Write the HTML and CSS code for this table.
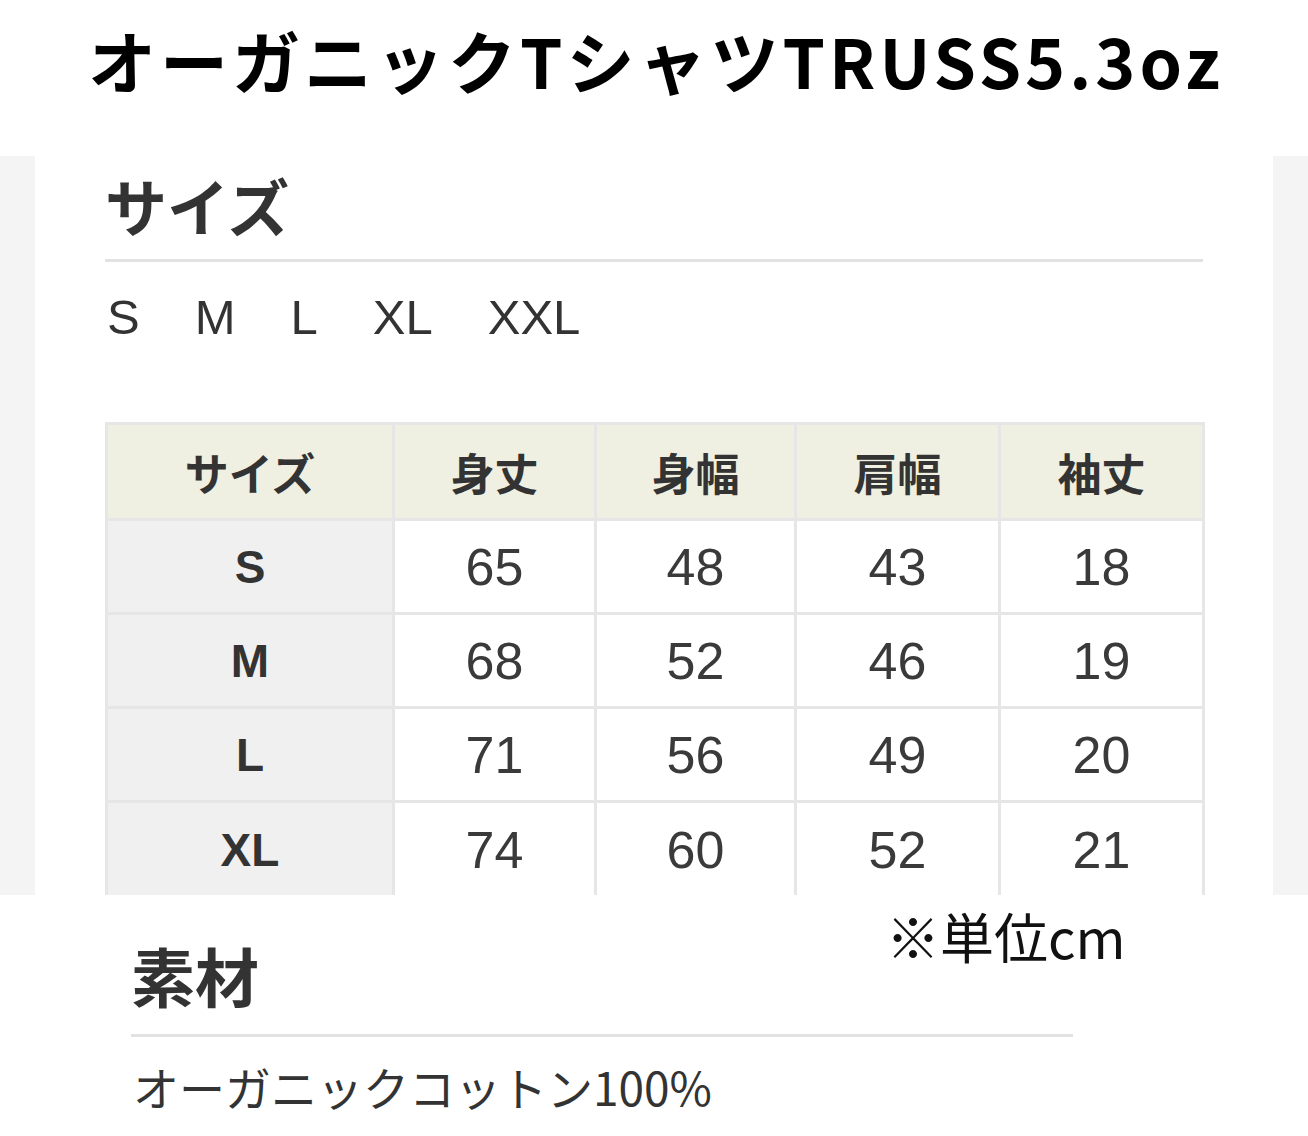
FILE: index.html
```
<!DOCTYPE html>
<html lang="ja">
<head>
<meta charset="utf-8">
<title>オーガニックTシャツTRUSS5.3oz</title>
<link rel="stylesheet" href="styles.css">
</head>
<body>
<header class="title-bar">
  <h1 class="title">オーガニックTシャツTRUSS5.3oz</h1>
</header>
<section class="panel">
  <div class="panel-inner">
    <h2 class="heading">サイズ</h2>
    <ul class="size-list">
      <li>S</li><li>M</li><li>L</li><li>XL</li><li>XXL</li>
    </ul>
    <table class="size-table">
      <colgroup>
        <col class="c-size"><col class="c1"><col class="c2"><col class="c3"><col class="c4">
      </colgroup>
      <thead>
        <tr><th>サイズ</th><th>身丈</th><th>身幅</th><th>肩幅</th><th>袖丈</th></tr>
      </thead>
      <tbody>
        <tr><th>S</th><td>65</td><td>48</td><td>43</td><td>18</td></tr>
        <tr><th>M</th><td>68</td><td>52</td><td>46</td><td>19</td></tr>
        <tr><th>L</th><td>71</td><td>56</td><td>49</td><td>20</td></tr>
        <tr class="last-row"><th>XL</th><td>74</td><td>60</td><td>52</td><td>21</td></tr>
      </tbody>
    </table>
  </div>
</section>
<section class="bottom">
  <p class="unit-note">※単位cm</p>
  <div class="material">
    <h2 class="heading material-heading">素材</h2>
    <p class="material-text">オーガニックコットン100%</p>
  </div>
</section>
</body>
</html>
```
FILE: styles.css
```
html, body {
  margin: 0;
  padding: 0;
  background: #ffffff;
}
body {
  width: 1308px;
  font-family: "Noto Sans CJK JP", "Noto Sans", sans-serif;
  color: #333333;
}
.title-bar {
  height: 156px;
  box-sizing: border-box;
  padding-top: 18px;
}
.title {
  margin: 0;
  padding-left: 4px;
  font-size: 68px;
  line-height: 84px;
  font-weight: 700;
  color: #000000;
  text-align: center;
  letter-spacing: 4px;
}
.panel {
  height: 739px;
  background: #f4f4f4;
  padding: 0 35px;
  overflow: hidden;
}
.panel-inner {
  height: 100%;
  background: #ffffff;
  padding: 18px 70px 0 70px;
}
.heading {
  margin: 0;
  font-size: 62px;
  line-height: 62px;
  font-weight: 700;
  color: #333333;
  padding-bottom: 23px;
  border-bottom: 3px solid #e2e2e2;
}
.size-list {
  list-style: none;
  margin: 30px 0 0 2px;
  padding: 0;
  display: flex;
  gap: 55px;
  font-family: "Liberation Sans", "Noto Sans CJK JP", sans-serif;
  font-size: 49px;
  line-height: 50px;
  color: #333333;
}
.size-table {
  margin-top: 80px;
  width: 1097px;
  table-layout: fixed;
  border-collapse: collapse;
  border: 3px solid #e6e6e6;
  border-bottom: 0;
}
.c-size { width: 287px; }
.c1 { width: 202px; }
.c2 { width: 200px; }
.c3 { width: 204px; }
.c4 { width: 204px; }
.size-table th,
.size-table td {
  border: 3px solid #e6e6e6;
  text-align: center;
  vertical-align: middle;
  padding: 0;
  height: 91px;
  color: #333333;
}
.size-table .last-row th,
.size-table .last-row td {
  border-bottom: 0;
  height: 96px;
  vertical-align: top;
  padding-top: 3px;
  line-height: 88px;
}
.size-table thead th {
  height: 93px;
  background: #efefe2;
  font-size: 44px;
  font-weight: 700;
}
.size-table tbody th {
  background: #f0f0f0;
  font-family: "Liberation Sans", "Noto Sans CJK JP", sans-serif;
  font-size: 46px;
  font-weight: 700;
}
.size-table tbody td {
  font-family: "Liberation Sans", "Noto Sans CJK JP", sans-serif;
  font-size: 52px;
  font-weight: 400;
  color: #3a3a3a;
}
.bottom {
  padding-top: 8px;
}
.unit-note {
  margin: 0;
  padding-left: 886px;
  font-size: 54px;
  line-height: 66px;
  color: #111111;
  font-weight: 400;
}
.material {
  margin: -27px 0 0 131px;
  width: 942px;
}
.material-heading {
  font-size: 64px;
  line-height: 64px;
  padding-bottom: 28px;
}
.material-text {
  margin: 24px 0 0 2px;
  font-size: 46px;
  line-height: 50px;
  color: #333333;
}
```
